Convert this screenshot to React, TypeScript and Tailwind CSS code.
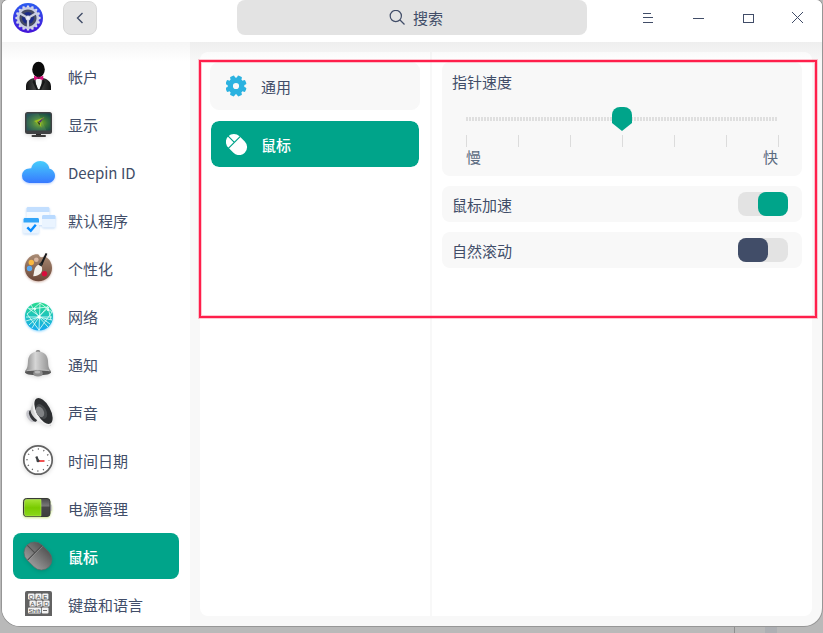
import { useState } from 'react';
import type { ReactNode } from 'react';

const AccountIcon = () => (
  <svg viewBox="0 0 36 36" className="size-9 shrink-0" aria-hidden="true">
    <defs>
      <linearGradient id="suit" x1="0" x2="1">
        <stop offset="0" stopColor="#111" />
        <stop offset=".3" stopColor="#3c3c3c" />
        <stop offset=".7" stopColor="#333" />
        <stop offset="1" stopColor="#111" />
      </linearGradient>
    </defs>
    <path d="M6 32v-3.500c0-4.500 2.500-7 8-8.500l4.500-2 4.500 2c5.500 1.500 8 4 8 8.500V32z" fill="url(#suit)" />
    <path d="M15.500 20h6.500l-.5 6-2 5h-1.500l-2-5z" fill="#f4f4f4" />
    <path d="M14 21 18 32h-1.500l-4-8zM23.500 21 19.500 32H21l4-8z" fill="#161616" />
    <ellipse cx="18.500" cy="11.500" rx="6.300" ry="7.700" fill="#0b0b0b" />
    <path d="M14 17.700l4 1.500h1l4.300-1.500v4.600l-4.300-1.500h-1l-4 1.500z" fill="#d9127d" />
    <rect x="17.600" y="18.600" width="2" height="2.400" fill="#8c0a50" />
  </svg>
);

const DisplayIcon = () => (
  <svg viewBox="0 0 36 36" className="size-9 shrink-0 drop-shadow-sm" aria-hidden="true">
    <defs>
      <radialGradient id="screen" cx=".55" cy=".55" r=".65">
        <stop offset="0" stopColor="#7fb01c" />
        <stop offset=".5" stopColor="#38763b" />
        <stop offset="1" stopColor="#15474b" />
      </radialGradient>
    </defs>
    <rect x="16" y="27" width="5" height="3" fill="#2b2b2b" />
    <rect x="11.500" y="29" width="14.500" height="2" rx="1" fill="#3c3c3c" />
    <rect x="5" y="6" width="27" height="22" rx="2.500" fill="#3f4143" />
    <rect x="6.500" y="7.500" width="24" height="17" rx="1" fill="url(#screen)" />
    <path d="M6.500 7.500h12l8 17h-20z" fill="#fff" opacity=".08" />
    <path d="M14 15l4.500-1.500 6-2.500-4 5.500 1 5-3-3.500z" fill="#a9c81c" opacity=".8" />
    <path d="M18 16l6.500-5-4 5.500z" fill="#502e78" />
    <path d="M17 15.500l3 1.500-.5 2.500z" fill="#24351b" />
  </svg>
);

const CloudIcon = () => (
  <svg viewBox="0 0 36 36" className="size-9 shrink-0 drop-shadow-[0_1px_1px_#3c82ff60]" aria-hidden="true">
    <defs>
      <linearGradient id="cloud" x1="0" x2="0" y1="0" y2="1">
        <stop offset="0" stopColor="#46cdfb" />
        <stop offset="1" stopColor="#3779ff" />
      </linearGradient>
    </defs>
    <path d="M9.300 29A7.300 7.300 0 0 1 9.300 14.400l2-.1C12.200 10 15.800 7 20.200 7c4.900 0 8.500 3.200 9.200 7.700 3.200.6 5.600 3.500 5.600 7.100 0 4-3.200 7.200-7.200 7.200z" fill="url(#cloud)" />
  </svg>
);

const DefaultAppsIcon = () => (
  <svg viewBox="0 0 36 36" className="size-9 shrink-0 drop-shadow-[0_1px_1px_#3c8ce64d]" aria-hidden="true">
    <rect x="6.500" y="5" width="23" height="18" rx="1.500" fill="#f5faff" />
    <path d="M6.500 10V6.500C6.500 5.700 7.200 5 8 5h20c.8 0 1.500.7 1.500 1.500V10z" fill="#c3dfff" />
    <rect x="22" y="13" width="13.500" height="12.500" rx="1.500" fill="#eaf4ff" />
    <path d="M22 17v-2.500c0-.8.700-1.500 1.500-1.500H34c.8 0 1.500.7 1.500 1.500V17z" fill="#b9daff" />
    <rect x="3" y="15.500" width="16" height="16" rx="1.500" fill="#e9f4ff" />
    <path d="M3.500 20.500v-3c0-.8.700-1.500 1.500-1.500h12.500c.8 0 1.500.7 1.500 1.500v3z" fill="#32a5f8" />
    <path d="M7.300 25.300l3.500 3.500 5-6" fill="none" stroke="#078cff" strokeWidth="2.400" />
  </svg>
);

const PaletteIcon = () => (
  <svg viewBox="0 0 36 36" className="size-9 shrink-0 drop-shadow-[0_1px_1px_#8b3c2060]" aria-hidden="true">
    <defs>
      <linearGradient id="wood" x1="0" x2="0" y1="0" y2="1">
        <stop offset="0" stopColor="#a98c75" />
        <stop offset="1" stopColor="#6b4738" />
      </linearGradient>
    </defs>
    <path d="M15.500 4.200C17.500 4 19 4.200 19.200 5.500c.3 2 3.500 2.300 5 .8C29.500 8.500 32 13 32 18c0 7.500-6 13.300-13.500 13.300S4.800 25.500 4.800 18c0-7 4.500-12.700 10.700-13.800z" fill="url(#wood)" />
    <circle cx="16.300" cy="9.700" r="2.300" fill="#d8b7a2" />
    <circle cx="11.300" cy="12.500" r="2.700" fill="#fbb83e" />
    <circle cx="9.500" cy="18.500" r="2.700" fill="#5aaaf2" />
    <circle cx="24.500" cy="23.700" r="2.700" fill="#d80d3c" />
    <path d="M25.700 3l1.600.8-5 11.200-2-1.200z" fill="#17191b" />
    <path d="M20.200 12.500l2.600 1.400-1.300 2.800-2.900-1.600z" fill="#2c3033" />
    <path d="M18.300 14.700l3.500 2c1.200 5-1 9-8.600 9.500 1.300-4.500.5-9 5.100-11.500z" fill="#f4f1ec" />
  </svg>
);

const NetworkIcon = () => (
  <svg viewBox="0 0 36 36" className="size-9 shrink-0 drop-shadow-[0_1px_1px_#30b4ff80]" aria-hidden="true">
    <defs>
      <linearGradient id="globe" x1="0" x2="0" y1="0" y2="1">
        <stop offset="0" stopColor="#27dc8f" />
        <stop offset="1" stopColor="#15a9ee" />
      </linearGradient>
    </defs>
    <circle cx="19" cy="18.500" r="14" fill="url(#globe)" />
    <g fill="none" stroke="#e3fff8" strokeWidth=".8">
      <path d="M6 19h26M20 5l-1 28M8 10l22 16M29 9 9 27M20 5 7 16l12 16L32 14zM11 7l8 12 9 10M28 8 19 19 6 23M12 30l7-11 13 3M9 11l19-2 3 13" />
    </g>
    <circle cx="19" cy="19" r="1.600" fill="#fff" />
    <circle cx="15" cy="11" r="1" fill="#fff" />
    <circle cx="28" cy="12" r="1" fill="#fff" />
  </svg>
);

const BellIcon = () => (
  <svg viewBox="0 0 36 36" className="size-9 shrink-0 drop-shadow-sm" aria-hidden="true">
    <defs>
      <linearGradient id="bell" x1="0" x2="1">
        <stop offset="0" stopColor="#858585" />
        <stop offset=".4" stopColor="#d6d6d6" />
        <stop offset="1" stopColor="#8b8b8b" />
      </linearGradient>
    </defs>
    <ellipse cx="18" cy="5.500" rx="2.300" ry="1.600" fill="#7d7d7d" />
    <path d="M18 5.500c6 0 9.600 3.600 10 9.300.3 5 .4 7.400 3 10.200v1.500H5V25c2.600-2.800 2.700-5.200 3-10.200.4-5.700 4-9.300 10-9.300z" fill="url(#bell)" />
    <path d="M5 26c2-2 24-2 26 0 .5 2-5.500 3.300-13 3.300S4.500 28 5 26z" fill="#585858" />
    <path d="M7 24.700c3-1 19-1 22 0" stroke="#c4c4c4" strokeWidth=".7" fill="none" />
    <ellipse cx="18" cy="27.200" rx="4.700" ry="3.300" fill="#8f8f8f" />
    <ellipse cx="17.500" cy="26" rx="2.800" ry="1.600" fill="#b9b9b9" />
  </svg>
);

const SoundIcon = () => (
  <svg viewBox="0 0 36 36" className="size-9 shrink-0 drop-shadow-sm" aria-hidden="true">
    <defs>
      <linearGradient id="cone" x1="0" x2="1">
        <stop offset="0" stopColor="#c6c6c6" />
        <stop offset=".4" stopColor="#f6f6f6" />
        <stop offset="1" stopColor="#a0a0a0" />
      </linearGradient>
    </defs>
    <ellipse cx="11" cy="22" rx="4" ry="6.500" transform="rotate(-30 11 22)" fill="#c4c4ca" />
    <ellipse cx="13" cy="22" rx="3" ry="6.300" transform="rotate(-30 13 22)" fill="#333538" />
    <path d="M14 4c-1 6-3.500 9.500-3.500 13 1.500 6.500 9 12.500 20.500 14.500z" fill="url(#cone)" />
    <ellipse cx="23" cy="17.200" rx="8.300" ry="15.600" transform="rotate(-29 23 17.200)" fill="#f0f0f0" />
    <ellipse cx="23.500" cy="17" rx="6.900" ry="14.200" transform="rotate(-29 23.500 17)" fill="#2c2e30" />
    <ellipse cx="21.500" cy="17.500" rx="4.800" ry="8" transform="rotate(-29 21.500 17.500)" fill="#474a4c" />
    <ellipse cx="20" cy="17.800" rx="3.700" ry="5.600" transform="rotate(-29 20 17.800)" fill="#808284" />
  </svg>
);

const ClockIcon = () => (
  <svg viewBox="0 0 36 36" className="size-9 shrink-0 drop-shadow-sm" aria-hidden="true">
    <circle cx="18" cy="18" r="14.200" fill="#fff" stroke="#626262" strokeWidth="1.700" />
    <circle cx="18" cy="18" r="11" fill="none" stroke="#555" strokeWidth="1.500" strokeDasharray="1 4.760" strokeDashoffset=".5" />
    <path d="M18 19h6.500" stroke="#f14a4a" strokeWidth="1.900" />
    <path d="M18.300 19.500l-2-5" stroke="#3e4244" strokeWidth="2.200" />
    <circle cx="18" cy="18.800" r="1.500" fill="#3e4244" />
  </svg>
);

const BatteryIcon = () => (
  <svg viewBox="0 0 36 36" className="size-9 shrink-0 drop-shadow-[0_1px_1px_#8bc80070]" aria-hidden="true">
    <defs>
      <linearGradient id="charge" x1="0" x2="0" y1="0" y2="1">
        <stop offset="0" stopColor="#a5e436" />
        <stop offset=".5" stopColor="#79cb00" />
        <stop offset="1" stopColor="#8ad818" />
      </linearGradient>
      <linearGradient id="shell" x1="0" x2="0" y1="0" y2="1">
        <stop offset="0" stopColor="#4a4a4a" />
        <stop offset=".4" stopColor="#777" />
        <stop offset=".5" stopColor="#474747" />
        <stop offset="1" stopColor="#3e3e3e" />
      </linearGradient>
    </defs>
    <rect x="29" y="14.500" width="3" height="6.500" rx="1" fill="#c9c9c9" />
    <rect x="3.500" y="8.500" width="26.500" height="18" rx="3" fill="url(#shell)" stroke="#383a36" />
    <path d="M21 9.500V26H6.500A2 2 0 0 1 4.500 24V11.500a2 2 0 0 1 2-2z" fill="url(#charge)" stroke="#b9ed60" strokeWidth=".6" />
  </svg>
);

const MouseIcon = () => (
  <svg viewBox="0 0 36 36" className="size-9 shrink-0 drop-shadow-sm" aria-hidden="true">
    <defs>
      <linearGradient id="mouse" x1="0" x2="1" y1="0" y2="0">
        <stop offset="0" stopColor="#989898" />
        <stop offset="1" stopColor="#565656" />
      </linearGradient>
    </defs>
    <g transform="rotate(-45 18 18)">
      <rect x="7.500" y="2.600" width="21" height="30.800" rx="10.500" fill="url(#mouse)" stroke="#656565" strokeWidth=".6" />
      <path d="M7.800 13.500h20.400M18 3v10.500" stroke="#4d4d4d" strokeWidth="1" fill="none" />
      <path d="M8 14.500h20" stroke="#a3a3a3" strokeWidth=".5" />
    </g>
  </svg>
);

const KeyboardIcon = () => (
  <svg viewBox="0 0 36 36" className="size-9 shrink-0" aria-hidden="true">
    <rect x="5" y="5" width="27" height="28" rx="2" fill="#626262" />
    <g fill="#f3f3f3">
      <rect x="8" y="7.500" width="6.500" height="6" rx="1" />
      <rect x="15.300" y="7.500" width="6.200" height="6" rx="1" />
      <rect x="22.200" y="7.500" width="6.200" height="6" rx="1" />
      <rect x="9.500" y="14.500" width="6.300" height="6" rx="1" />
      <rect x="16.500" y="14.500" width="6" height="6" rx="1" />
      <rect x="23.200" y="14.500" width="6.300" height="6" rx="1" />
      <rect x="8" y="21.500" width="13" height="6" rx="1" />
      <rect x="21.800" y="21.500" width="6.700" height="6" rx="1" />
    </g>
    <g fill="#444" fontFamily="Liberation Sans, sans-serif" fontSize="6" textAnchor="middle">
      <text x="11.200" y="12.700">Q</text>
      <text x="18.400" y="12.700">A</text>
      <text x="25.300" y="12.700">E</text>
      <text x="12.600" y="19.700">A</text>
      <text x="19.500" y="19.700">S</text>
      <text x="26.400" y="19.700">D</text>
      <text x="14.500" y="26.600">Shift</text>
    </g>
    <path d="M23 24.500h4" stroke="#444" strokeWidth=".8" />
  </svg>
);

const teeth = [0, 22.5, 45, 67.5, 90, 112.5, 135, 157.5, 180, 202.5, 225, 247.5, 270, 292.5, 315, 337.5];
const windows = [0, 120, 240];

const LogoIcon = () => (
  <svg viewBox="0 0 30 30" className="size-[30px]" aria-hidden="true">
    <defs>
      <linearGradient id="ring" x1="0" x2="0" y1="0" y2="1">
        <stop offset="0" stopColor="#2b5cf0" />
        <stop offset="1" stopColor="#4413d8" />
      </linearGradient>
    </defs>
    <circle cx="15" cy="15" r="15" fill="url(#ring)" />
    {teeth.map((angle) => (
      <rect key={angle} x="13.800" y="2.400" width="2.400" height="3" rx=".6" fill="#d5d8ea" transform={`rotate(${angle} 15 15)`} />
    ))}
    <circle cx="15" cy="15" r="11" fill="#c9cde2" />
    {/* three openings of the wheel, spokes between them */}
    {windows.map((angle) => (
      <g key={angle} transform={`rotate(${angle} 15 15)`}>
        <path d="M8.200 9.800a8.600 8.600 0 0 1 13.600 0L16.800 12.800a3.200 3.200 0 0 0-3.600 0z" fill="#454b66" />
        <path d="M11 10.600a6 6 0 0 1 8 0L16.400 12.500a3.200 3.200 0 0 0-2.800 0z" fill="#1c2a8a" />
      </g>
    ))}
    <circle cx="15" cy="15" r="1.800" fill="#eceef8" />
  </svg>
);

const gearTeeth = [22.5, 67.5, 112.5, 157.5, 202.5, 247.5, 292.5, 337.5];

const GearIcon = () => (
  <svg viewBox="0 0 22 22" className="size-[22px] shrink-0" aria-hidden="true">
    <g fill="#2bb2e0">
      {gearTeeth.map((angle) => (
        <rect key={angle} x="7.600" y=".4" width="4.800" height="5" rx="1.200" transform={`rotate(${angle} 10 11)`} />
      ))}
      <path fillRule="evenodd" d="M10 2.600a8.400 8.400 0 1 1 0 16.800 8.400 8.400 0 0 1 0-16.800zm0 5.300a3.100 3.100 0 1 0 0 6.200 3.100 3.100 0 0 0 0-6.200z" />
    </g>
  </svg>
);

const MouseGlyph = () => (
  <svg viewBox="0 0 22 22" className="size-[22px] shrink-0" aria-hidden="true">
    <g transform="rotate(-45 10.500 11.500)">
      <rect x="2.500" y="-.2" width="16" height="23.400" rx="8" fill="#fff" />
      <path d="M2 8.500h17M10.500-1v9.500" stroke="#00a48a" strokeWidth="1.200" />
    </g>
  </svg>
);

const navItems: { label: string; icon: ReactNode }[] = [
  { label: '帐户', icon: <AccountIcon /> },
  { label: '显示', icon: <DisplayIcon /> },
  { label: 'Deepin ID', icon: <CloudIcon /> },
  { label: '默认程序', icon: <DefaultAppsIcon /> },
  { label: '个性化', icon: <PaletteIcon /> },
  { label: '网络', icon: <NetworkIcon /> },
  { label: '通知', icon: <BellIcon /> },
  { label: '声音', icon: <SoundIcon /> },
  { label: '时间日期', icon: <ClockIcon /> },
  { label: '电源管理', icon: <BatteryIcon /> },
  { label: '鼠标', icon: <MouseIcon /> },
  { label: '键盘和语言', icon: <KeyboardIcon /> },
];

const tabs = [
  { label: '通用', icon: <GearIcon /> },
  { label: '鼠标', icon: <MouseGlyph /> },
];

function TitleBar() {
  return (
    <header className="h-[42px] shrink-0 grid grid-cols-[1fr_minmax(0,350px)_1fr] items-start bg-white">
      <div className="h-9 flex items-center gap-5 pl-[11px]">
        <LogoIcon />
        <button aria-label="返回" className="size-[34px] flex items-center justify-center rounded-lg border border-[#d8d8d8] bg-[#e5e5e5]">
          <svg viewBox="0 0 12 14" className="w-3 h-3.5" fill="none" stroke="#414d68" strokeWidth="1.400">
            <path d="M8.500 2 3.500 7l5 5" />
          </svg>
        </button>
      </div>
      <label className="h-[35px] flex items-center justify-center gap-2 pl-2 rounded-lg bg-[#e3e3e3]">
        <svg viewBox="0 0 16 16" className="size-4" fill="none" stroke="#414d68" strokeWidth="1.200" aria-hidden="true">
          <circle cx="6.800" cy="6" r="5.600" />
          <path d="M11 10 15.500 14.500" />
        </svg>
        <input type="search" aria-label="搜索" placeholder="搜索" className="field-sizing-content bg-transparent outline-none placeholder:text-[#414d68]" />
      </label>
      <div className="flex justify-end">
        <button aria-label="菜单" className="w-[50px] h-9 flex items-center justify-center">
          <svg viewBox="0 0 12 12" className="size-3" stroke="#414d68" shapeRendering="crispEdges">
            <path d="M2 1.500h8M2 5.500h10M2 10.500h10" />
          </svg>
        </button>
        <button aria-label="最小化" className="w-[50px] h-9 flex items-center justify-center">
          <svg viewBox="0 0 14 12" className="w-3.5 h-3" stroke="#414d68" shapeRendering="crispEdges">
            <path d="M3 6.500h11" />
          </svg>
        </button>
        <button aria-label="最大化" className="w-[50px] h-9 flex items-center justify-center">
          <svg viewBox="0 0 14 12" className="w-3.5 h-3" fill="none" stroke="#414d68" shapeRendering="crispEdges">
            <path d="M3.500 2.500h10v8h-10z" />
          </svg>
        </button>
        <button aria-label="关闭" className="w-[50px] h-9 flex items-center justify-center">
          <svg viewBox="0 0 12 12" className="size-3" stroke="#414d68">
            <path d="M1 0l11 11M12 0l-11 11" />
          </svg>
        </button>
      </div>
    </header>
  );
}

function Sidebar() {
  const [active, setActive] = useState('鼠标');

  return (
    <nav className="w-[188px] shrink-0 flex flex-col min-h-0 bg-white px-[11px] pt-[11px] pb-2.5">
      <ul className="flex-1 min-h-0 flex flex-col gap-0.5 overflow-hidden">
        {navItems.map(({ label, icon }) => (
          <li key={label}>
            <a
              href="#"
              onClick={() => setActive(label)}
              className={`h-[46px] flex items-center gap-3 pl-[7px] rounded-lg ${active === label ? 'bg-[#00a48a] text-white font-medium' : ''}`}
            >
              {icon}
              <span className="pt-0.5">{label}</span>
            </a>
          </li>
        ))}
      </ul>
    </nav>
  );
}

function SwitchRow({ label, defaultChecked }: { label: string; defaultChecked?: boolean }) {
  return (
    <label className="h-9 flex items-center justify-between pl-2.5 pr-3.5 rounded-lg bg-[#f8f8f8]">
      <span className="pt-0.5">{label}</span>
      <input
        type="checkbox"
        role="switch"
        defaultChecked={defaultChecked}
        className="appearance-none w-[50px] h-6 flex rounded-lg bg-[#e3e3e3] before:w-[30px] before:h-6 before:rounded-lg before:bg-[#414d68] checked:justify-end checked:before:bg-[#00a48a]"
      />
    </label>
  );
}

function PointerSpeed() {
  const [speed, setSpeed] = useState(4);

  return (
    <section className="pt-2 pb-[9px] rounded-lg bg-[#f8f8f8]">
      <label htmlFor="speed" className="block px-2.5 pt-px">指针速度</label>
      <div className="mt-3.5 px-6">
        <input
          id="speed"
          type="range"
          min={1}
          max={7}
          value={speed}
          onChange={(e) => setSpeed(Number(e.target.value))}
          className="block w-full h-6 appearance-none bg-[repeating-linear-gradient(90deg,#dfdfdf_0_2px,transparent_2px_3px)] bg-[length:100%_4px] bg-center bg-no-repeat [&::-webkit-slider-thumb]:appearance-none [&::-webkit-slider-thumb]:w-5 [&::-webkit-slider-thumb]:h-6 [&::-webkit-slider-thumb]:rounded-t-lg [&::-webkit-slider-thumb]:bg-[#00a48a] [&::-webkit-slider-thumb]:[clip-path:polygon(0_0,100%_0,100%_67%,50%_100%,0_67%)]"
        />
        <div className="mt-1 -mr-px flex justify-between">
          {[1, 2, 3, 4, 5, 6, 7].map((n) => (
            <span key={n} className="w-px h-3 bg-[#dcdcdc]" />
          ))}
        </div>
        <div className="flex justify-between leading-5 text-[#5b6b80]">
          <span>慢</span>
          <span>快</span>
        </div>
      </div>
    </section>
  );
}

export default function App() {
  const [tab, setTab] = useState('鼠标');

  return (
    <div className="h-screen flex flex-col bg-[#b9b9b9] pl-0.5 pr-px font-['Noto_Sans_CJK_SC','Noto_Sans',sans-serif] text-[15px] leading-[22px] text-[#414d68]">
      <div className="flex-1 min-h-0 flex flex-col overflow-hidden rounded-t-md rounded-b-[18px] bg-[#f8f8f8] shadow-[0_0_0_1px_#969696]">
        <TitleBar />
        <div className="relative flex-1 min-h-0 flex">
          <Sidebar />
          <main className="relative flex-1 min-w-0 flex p-2.5">
            <div className="flex-1 min-w-0 flex rounded-lg bg-white">
              <div className="w-[232px] shrink-0 flex flex-col gap-2.5 p-2.5 border-r-2 border-[#f8f8f8]">
                {tabs.map(({ label, icon }) => (
                  <button
                    key={label}
                    onClick={() => setTab(label)}
                    className={`h-12 flex items-center gap-[13px] pl-[15px] rounded-[9px] border ${tab === label ? 'border-white bg-[#00a48a] bg-clip-padding text-white font-medium' : 'border-[#f8f8f8] bg-[#f8f8f8]'}`}
                  >
                    {icon}
                    <span className="pt-0.5">{label}</span>
                  </button>
                ))}
              </div>
              <div className="flex-1 min-w-0 flex flex-col gap-2.5 p-2.5">
                <PointerSpeed />
                <SwitchRow label="鼠标加速" defaultChecked />
                <SwitchRow label="自然滚动" />
              </div>
            </div>
            {/* highlight frame around the mouse options */}
            <div className="pointer-events-none absolute left-[9px] right-[5px] top-[18px] h-[258px] border-2 border-[#ff1f4b] shadow-[0_0_0_1px_#ff1f4b40,inset_0_0_0_1px_#ff1f4b40]" />
          </main>
          <div className="pointer-events-none absolute inset-x-0 top-0 h-5 bg-linear-to-b from-black/4 to-transparent" />
        </div>
      </div>
      <div className="h-[7px] shrink-0 flex justify-end gap-[30px] pt-px pr-[45px]">
        <span className="w-px bg-[#8e8e8e]" />
        <span className="w-3 bg-[#adafb3]" />
      </div>
    </div>
  );
}
